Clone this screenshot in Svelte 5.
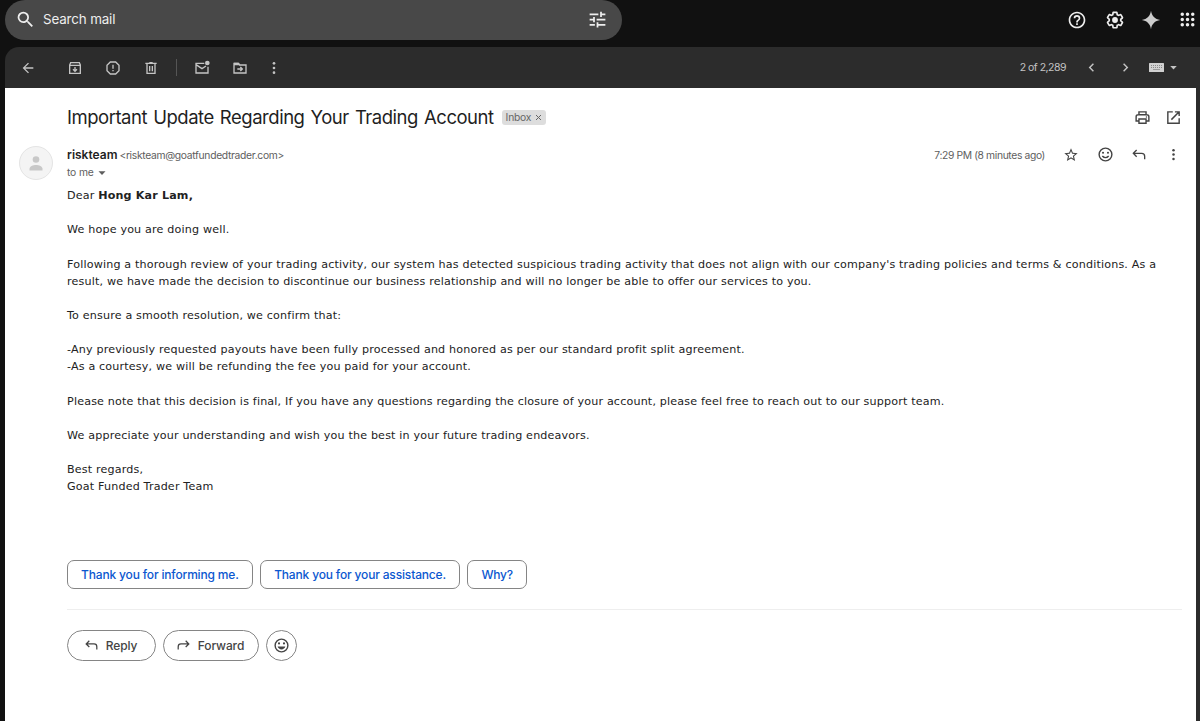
<script>
  const icons = {
    search: '<path d="M15.5 14h-.79l-.28-.27A6.47 6.47 0 0 0 16 9.5 6.5 6.5 0 1 0 9.5 16c1.61 0 3.09-.59 4.23-1.57l.27.28v.79l5 4.99L20.49 19l-4.99-5zm-6 0C7.01 14 5 11.99 5 9.5S7.01 5 9.5 5 14 7.01 14 9.5 11.99 14 9.5 14z"/>',
    tune: '<path d="M3 17v2h6v-2H3zM3 5v2h10V5H3zm10 16v-2h8v-2h-8v-2h-2v6h2zM7 9v2H3v2h4v2h2V9H7zm14 4v-2H11v2h10zm-6-4h2V7h4V5h-4V3h-2v6z"/>',
    help: '<path d="M11 18h2v-2h-2v2zm1-16C6.48 2 2 6.48 2 12s4.48 10 10 10 10-4.48 10-10S17.52 2 12 2zm0 18c-4.41 0-8-3.59-8-8s3.59-8 8-8 8 3.59 8 8-3.59 8-8 8zm0-14a4 4 0 0 0-4 4h2c0-1.1.9-2 2-2s2 .9 2 2c0 2-3 1.75-3 5h2c0-2.25 3-2.5 3-5a4 4 0 0 0-4-4z"/>',
    settings: '<path d="M13.85 22.25h-3.7c-.74 0-1.36-.54-1.45-1.27l-.27-1.89c-.27-.14-.53-.29-.79-.46l-1.8.72c-.7.26-1.47-.03-1.81-.65L2.2 15.53c-.35-.66-.2-1.44.36-1.88l1.53-1.19c-.01-.15-.02-.3-.02-.46 0-.15.01-.31.02-.46l-1.52-1.19c-.59-.45-.74-1.26-.37-1.88l1.85-3.19c.34-.62 1.11-.9 1.79-.63l1.81.73c.26-.17.52-.32.78-.46l.27-1.91c.09-.7.71-1.25 1.44-1.25h3.7c.74 0 1.36.54 1.45 1.27l.27 1.89c.27.14.53.29.79.46l1.8-.72c.71-.26 1.48.03 1.82.65l1.84 3.18c.36.66.2 1.44-.36 1.88l-1.52 1.19c.01.15.02.3.02.46s-.01.31-.02.46l1.52 1.19c.56.45.72 1.23.37 1.86l-1.86 3.22c-.34.62-1.11.9-1.8.63l-1.8-.72c-.26.17-.52.32-.78.46l-.27 1.91c-.1.68-.72 1.22-1.46 1.22zm-3.23-2h2.76l.37-2.55.53-.22c.44-.18.88-.44 1.34-.78l.45-.34 2.38.96 1.38-2.4-2.03-1.58.07-.56c.03-.26.06-.51.06-.78s-.03-.53-.06-.78l-.07-.56 2.03-1.58-1.39-2.4-2.39.96-.45-.35c-.42-.32-.87-.58-1.33-.77l-.52-.22-.37-2.55h-2.76l-.37 2.55-.53.21c-.44.19-.88.44-1.34.79l-.45.33-2.38-.95-1.39 2.39 2.03 1.58-.07.56a7 7 0 0 0-.06.79c0 .26.02.53.06.78l.07.56-2.03 1.58 1.38 2.4 2.39-.96.45.35c.43.33.86.58 1.33.77l.53.22.38 2.55z"/><circle cx="12" cy="12" r="3.5"/>',
    spark: '<path d="M12 1c.9 6.300 4.700 10.100 11 11-6.300.9-10.100 4.700-11 11-.9-6.300-4.700-10.100-11-11C7.300 11.100 11.100 7.300 12 1z"/>',
    apps: '<path d="M6 8a2 2 0 1 0 0-4 2 2 0 0 0 0 4zm6 12a2 2 0 1 0 0-4 2 2 0 0 0 0 4zm-6 0a2 2 0 1 0 0-4 2 2 0 0 0 0 4zm0-6a2 2 0 1 0 0-4 2 2 0 0 0 0 4zm6 0a2 2 0 1 0 0-4 2 2 0 0 0 0 4zm6-6a2 2 0 1 0 0-4 2 2 0 0 0 0 4zm-6 0a2 2 0 1 0 0-4 2 2 0 0 0 0 4zm6 6a2 2 0 1 0 0-4 2 2 0 0 0 0 4zm0 6a2 2 0 1 0 0-4 2 2 0 0 0 0 4z"/>',
    back: '<path d="M20 11H7.830l5.590-5.590L12 4l-8 8 8 8 1.410-1.410L7.830 13H20z"/>',
    archive: '<path class="line" d="M4 7.500 5.500 4h13L20 7.500V20H4zM4 8h16M12 10.500v6M9 14l3 3 3-3"/>',
    spam: '<path class="line" d="M8 3h8l5 5v8l-5 5H8l-5-5V8zM12 7v6"/><path d="M11 15h2v2h-2z"/>',
    trash: '<path class="line" d="M6 6v14h12V6M3.500 5h17M9.500 4h5M10 9v8M14 9v8"/>',
    unread: '<path class="line" d="M15.500 5H3v14.500h18V10M3 7l9 6 6-4"/><circle cx="20" cy="4.500" r="3.500"/>',
    move: '<path class="line" d="M3 19.500V5h6.500l2 2.500H21v12zM8 13.500h7M12.500 10.500l3 3-3 3"/><path d="M3 4h7l3 4H3z"/>',
    more: '<circle cx="12" cy="5" r="2"/><circle cx="12" cy="12" r="2"/><circle cx="12" cy="19" r="2"/>',
    left: '<path d="M15.410 7.410 14 6l-6 6 6 6 1.410-1.410L10.830 12z"/>',
    right: '<path d="M10 6 8.590 7.410 13.170 12l-4.580 4.590L10 18l6-6z"/>',
    down: '<path d="m6 9 6 6.500L18 9z"/>',
    print: '<path class="line" d="M7 8V4h10v4M7 17H3V11q0-3 3-3h12q3 0 3 3v6h-4M7 14h10v6H7z"/><circle cx="17.500" cy="11.300" r="1"/>',
    open: '<path class="line" d="M11 4H4v16h16v-7M14 4h6v6M9 15 20 4"/>',
    star: '<path d="m22 9.240-7.190-.62L12 2 9.190 8.630 2 9.240l5.460 4.730L5.820 21 12 17.270 18.180 21l-1.630-7.030zM12 15.400l-3.760 2.270 1-4.280-3.320-2.880 4.380-.38L12 6.100l1.710 4.040 4.380.38-3.320 2.880 1 4.280z"/>',
    smile: '<circle class="line" cx="12" cy="12" r="9"/><circle cx="8.500" cy="9" r="1.500"/><circle cx="15.500" cy="9" r="1.500"/><path d="M6.500 13.500h11c-.8 2.500-3 4-5.500 4s-4.700-1.500-5.500-4z"/>',
    smileThin: '<circle class="line" cx="12" cy="12" r="9"/><circle cx="8.500" cy="9.500" r="1.500"/><circle cx="15.500" cy="9.500" r="1.500"/><path class="line" d="M7.500 14q4.500 4.800 9 0"/>',
    reply: '<path class="line" d="M8.500 4.500 3.500 9.500l5 5M4 9.500h12q4.500 0 4.500 4.500v4.500"/>',
    forward: '<path class="line" d="m15.500 4.500 5 5-5 5M20 9.500H8q-4.500 0-4.500 4.500v4.500"/>'
  };

  const mailActions = ['archive', 'spam', 'trash'];
  const moveActions = ['unread', 'move', 'more'];

  const paragraphs = [
    ['We hope you are doing well.'],
    [
      "Following a thorough review of your trading activity, our system has detected suspicious trading activity that does not align with our company's trading policies and terms & conditions. As a",
      'result, we have made the decision to discontinue our business relationship and will no longer be able to offer our services to you.'
    ],
    ['To ensure a smooth resolution, we confirm that:'],
    [
      '-Any previously requested payouts have been fully processed and honored as per our standard profit split agreement.',
      '-As a courtesy, we will be refunding the fee you paid for your account.'
    ],
    ['Please note that this decision is final, If you have any questions regarding the closure of your account, please feel free to reach out to our support team.'],
    ['We appreciate your understanding and wish you the best in your future trading endeavors.'],
    ['Best regards,', 'Goat Funded Trader Team']
  ];

  const suggestions = ['Thank you for informing me.', 'Thank you for your assistance.', 'Why?'];
</script>

{#snippet icon(name, size = 17)}
  <svg class="icon" viewBox="0 0 24 24" width={size} height={size} aria-hidden="true">{@html icons[name]}</svg>
{/snippet}

<div class="app">
  <header>
    <div class="search">
      {@render icon('search', 21)}
      <span class="placeholder">Search mail</span>
      {@render icon('tune', 21)}
    </div>
    <nav>
      <button class="help">{@render icon('help', 20)}</button>
      <button>{@render icon('settings', 20)}</button>
      <button class="spark">{@render icon('spark', 20)}</button>
      <button class="apps">{@render icon('apps', 21)}</button>
    </nav>
  </header>

  <main>
    <div class="toolbar">
      <button class="back">{@render icon('back', 16)}</button>
      {#each mailActions as name}
        <button>{@render icon(name, 16)}</button>
      {/each}
      <span class="separator"></span>
      {#each moveActions as name}
        <button class:narrow={name === 'more'}>{@render icon(name, 16)}</button>
      {/each}
      <span class="count">2 of 2,289</span>
      <button class="newer">{@render icon('left', 17)}</button>
      <button class="older">{@render icon('right', 17)}</button>
      <button class="input-tool">
        <svg width="15" height="9" viewBox="0 0 15 9" aria-hidden="true">
          <rect width="15" height="9" rx=".5" fill="#d0d0d0" />
          <path d="M2 2.500h11M2 4.500h11" stroke="#888" stroke-dasharray="1 1" />
          <path d="M4 6.500h7" stroke="#999" />
        </svg>
        {@render icon('down', 13)}
      </button>
    </div>

    <article>
      <div class="subject">
        <h1>Important Update Regarding Your Trading Account</h1>
        <span class="label"><span>Inbox</span>
          <svg width="7" height="7" viewBox="0 0 7 7" aria-hidden="true"><path d="m1 1 5 5M6 1 1 6" stroke="#666" /></svg>
        </span>
        <div class="subject-actions">
          <button>{@render icon('print')}</button>
          <button>{@render icon('open')}</button>
        </div>
      </div>

      <div class="sender">
        <div class="avatar">
          <svg width="14" height="15" viewBox="0 0 14 15" aria-hidden="true">
            <circle cx="7" cy="3.500" r="3.300" />
            <path d="M.5 14.500v-1.700C.5 10.300 4 9 7 9s6.500 1.300 6.500 3.800v1.700z" />
          </svg>
        </div>
        <div class="from">
          <div><b>riskteam</b> <span class="address">&lt;riskteam@goatfundedtrader.com&gt;</span></div>
          <div class="to"><span>to me</span>{@render icon('down', 14)}</div>
        </div>
        <div class="meta">
          <span class="time">7:29 PM (8 minutes ago)</span>
          <button>{@render icon('star', 16)}</button>
          <button>{@render icon('smileThin')}</button>
          <button>{@render icon('reply', 16)}</button>
          <button>{@render icon('more', 15)}</button>
        </div>
      </div>

      <div class="body">
        <p>Dear <b>Hong Kar Lam,</b></p>
        {#each paragraphs as lines}
          <p>
            {#each lines as line}
              <span>{line}</span>
            {/each}
          </p>
        {/each}
      </div>

      <div class="suggestions">
        {#each suggestions as text}
          <button>{text}</button>
        {/each}
      </div>

      <div class="reply-bar">
        <button class="reply">{@render icon('reply', 15)}<span>Reply</span></button>
        <button class="forward">{@render icon('forward', 15)}<span>Forward</span></button>
        <button class="react">{@render icon('smile', 17)}</button>
      </div>
    </article>
  </main>
</div>

<style>
  :global(body) {
    margin: 0;
    background: #111;
  }

  .app {
    width: 1200px;
    height: 721px;
    overflow: hidden;
    background: #111;
    font-family: Inter, "Liberation Sans", sans-serif;
    box-sizing: border-box;
  }

  .app :global(*) {
    box-sizing: border-box;
  }

  button {
    display: flex;
    align-items: center;
    justify-content: center;
    flex: none;
    padding: 0;
    border: 0;
    background: none;
    color: inherit;
    font: inherit;
    cursor: pointer;
  }

  .icon {
    display: block;
    flex: none;
    fill: currentColor;
  }

  .icon :global(.line) {
    fill: none;
    stroke: currentColor;
    stroke-width: 2;
  }

  header {
    display: flex;
    justify-content: space-between;
    height: 47px;
    padding-left: 5px;
  }

  .search {
    display: flex;
    align-items: center;
    width: 617px;
    height: 40px;
    padding: 0 14px 2px 10px;
    border-radius: 20px;
    background: #484848;
    color: #eee;
  }

  .placeholder {
    flex: 1;
    margin-left: 7px;
    font-size: 13.4px;
    letter-spacing: -0.15px;
  }

  nav {
    display: flex;
    height: 39px;
    margin-right: -6px;
    color: #eee;
  }

  nav button {
    width: 37px;
  }

  nav .help {
    width: 39px;
  }

  nav .spark {
    width: 35px;
    color: #ccc;
  }

  nav .apps {
    width: 38px;
  }

  main {
    width: 1195px;
    height: 674px;
    margin-left: 5px;
    padding-right: 4px;
    border-radius: 14px 0 0 0;
    background: #2c2c2c;
  }

  .toolbar {
    display: flex;
    align-items: center;
    height: 41px;
    color: #c4c4c4;
  }

  .toolbar button {
    width: 38px;
    height: 38px;
  }

  .toolbar .back {
    margin: 0 9px 0 4px;
  }

  .toolbar .narrow {
    width: 30px;
  }

  .separator {
    width: 1px;
    height: 17px;
    margin: 0 6px 0 6px;
    background: #555;
  }

  .count {
    margin-left: auto;
    font-size: 10.5px;
    letter-spacing: -0.5px;
  }

  .toolbar .newer {
    width: 34px;
    margin-left: 8px;
  }

  .toolbar .older {
    width: 34px;
  }

  .toolbar .input-tool {
    gap: 3px;
    width: 44px;
    margin-right: 10px;
    padding-left: 1px;
  }

  article {
    height: 633px;
    padding: 14px 14px 0 62px;
    background: #fff;
    color: #1f1f1f;
  }

  .subject {
    display: flex;
    align-items: center;
    height: 30px;
  }

  h1 {
    margin: 0;
    font-size: 18.5px;
    font-weight: 400;
    letter-spacing: -0.48px;
    word-spacing: 1.4px;
    white-space: nowrap;
  }

  .label {
    display: flex;
    align-items: center;
    justify-content: space-between;
    width: 44px;
    height: 15px;
    margin-left: 8px;
    padding: 0 4px;
    border-radius: 3px;
    background: #ddd;
    color: #666;
    font-size: 10.3px;
    letter-spacing: -0.2px;
  }

  .subject-actions {
    display: flex;
    margin: 0 -7px 0 auto;
    color: #444;
  }

  .subject-actions button {
    width: 31px;
  }

  .sender {
    display: flex;
    height: 55px;
    margin-left: -48px;
  }

  .avatar {
    display: flex;
    align-items: center;
    justify-content: center;
    width: 34px;
    height: 34px;
    margin-top: 14px;
    border: 1px solid #e4e4e4;
    border-radius: 50%;
    background: #f4f4f4;
    fill: #c8c8c8;
  }

  .from {
    margin: 14px 0 0 14px;
    font-size: 10.3px;
    line-height: 17px;
    color: #5e5e5e;
    white-space: nowrap;
  }

  .from b {
    color: #1f1f1f;
    font-size: 12px;
    font-weight: 600;
  }

  .address {
    margin-left: -1px;
    letter-spacing: -0.31px;
  }

  .to {
    display: flex;
    align-items: center;
    gap: 1px;
    letter-spacing: -0.15px;
  }

  .meta {
    display: flex;
    align-items: center;
    height: 17px;
    margin: 14px -8px 0 auto;
    color: #444;
  }

  .meta button {
    width: 34px;
  }

  .time {
    margin-right: 9px;
    color: #5e5e5e;
    font-size: 10.3px;
    letter-spacing: -0.36px;
  }

  .body {
    height: 373px;
    font: 11.14px/17.14px "DejaVu Sans", sans-serif;
    letter-spacing: 0.17px;
    color: #222;
    white-space: nowrap;
  }

  .body p {
    margin: 0 0 17.14px;
  }

  .body p span {
    display: block;
  }

  .suggestions {
    display: flex;
    gap: 7px;
    height: 50px;
    border-bottom: 1px solid #eee;
  }

  .suggestions button {
    height: 29px;
    padding: 0 13.4px 0 13px;
    border: 1px solid #858585;
    border-radius: 7px;
    color: #0b57d0;
    font-size: 12px;
    font-weight: 500;
    letter-spacing: -0.16px;
  }

  .reply-bar {
    display: flex;
    gap: 7px;
    margin-top: 20px;
  }

  .reply-bar button {
    gap: 7px;
    height: 31px;
    padding-right: 2px;
    border: 1px solid #858585;
    border-radius: 16px;
    color: #444;
    font-size: 12px;
    font-weight: 500;
    letter-spacing: -0.1px;
  }

  .reply-bar .reply {
    width: 89px;
  }

  .reply-bar .forward {
    width: 96px;
  }

  .reply-bar .react {
    width: 31px;
    padding: 0;
  }
</style>
